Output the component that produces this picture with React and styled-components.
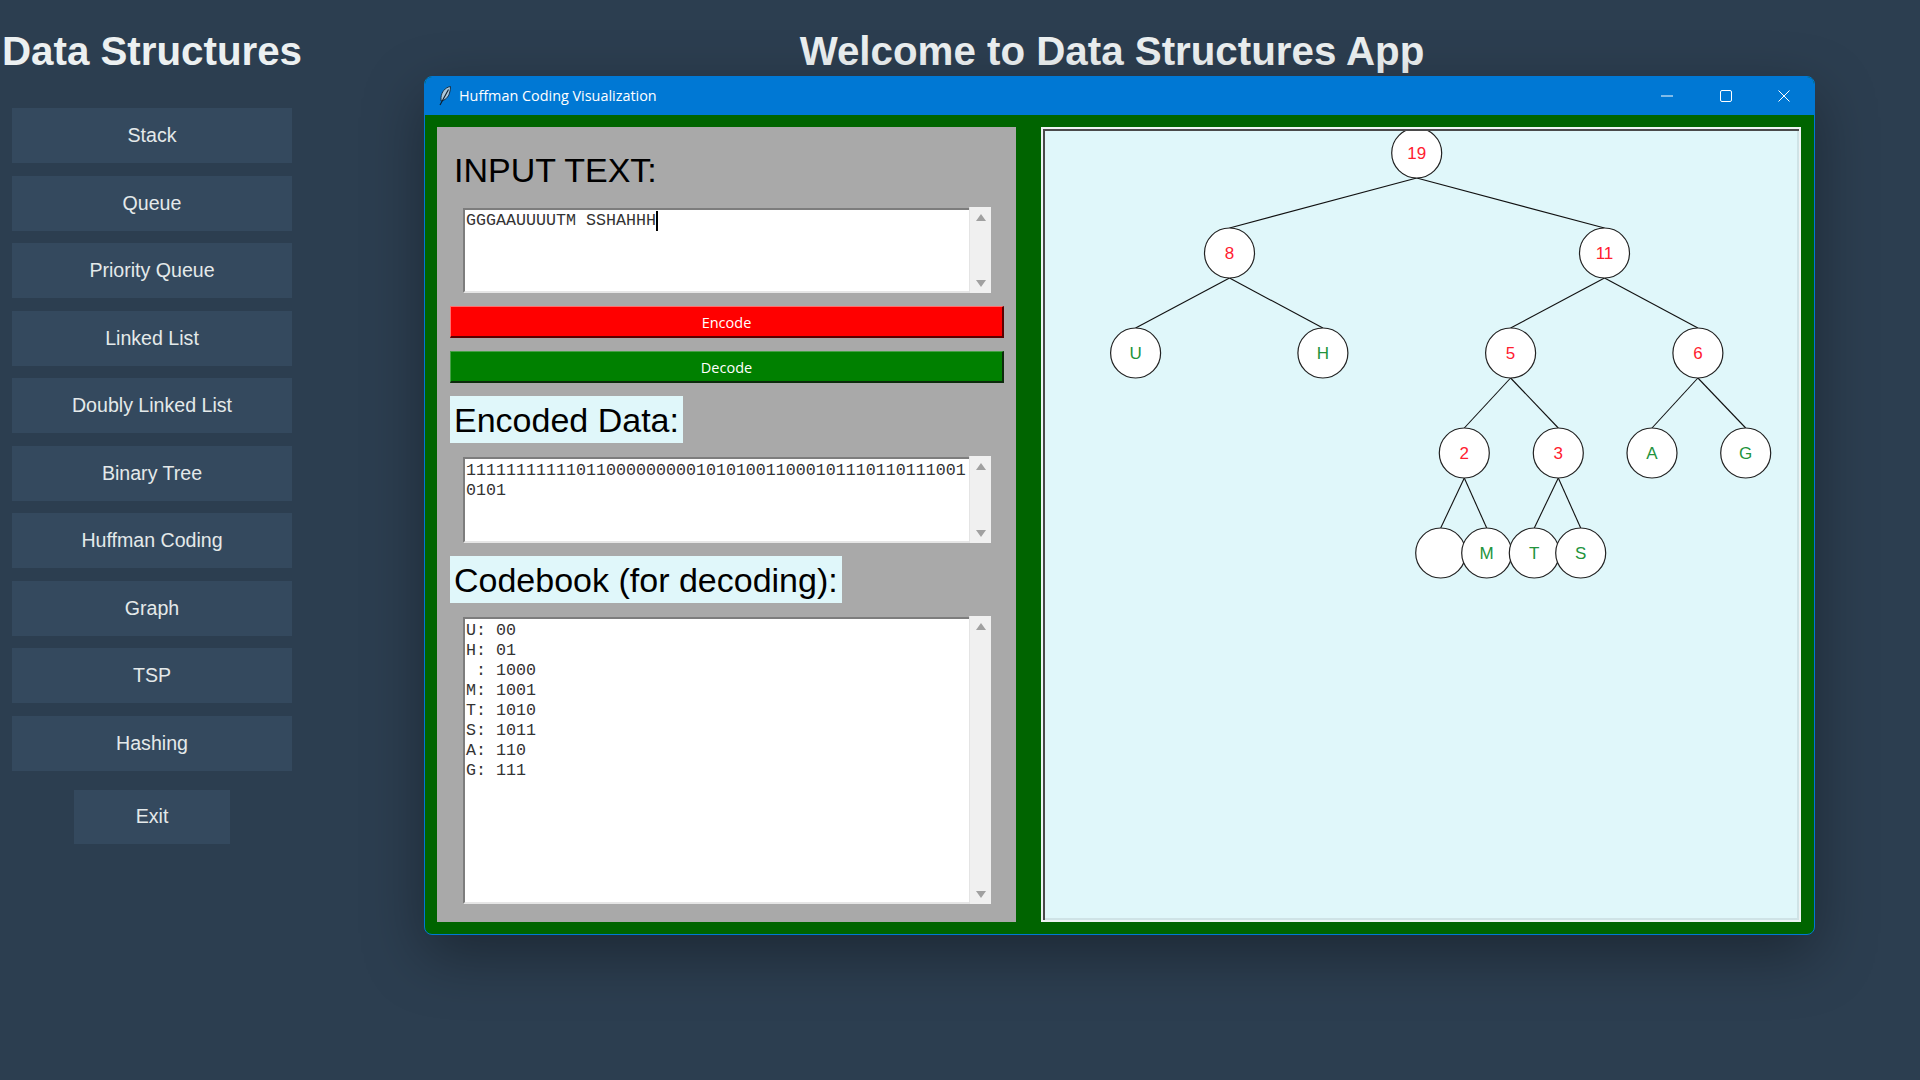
import React from "react";
import styled, { createGlobalStyle } from "styled-components";

const Global = createGlobalStyle`
  html, body { margin: 0; padding: 0; background: #2c3e50; }
  body { font-family: "Liberation Sans", Arial, sans-serif; overflow: hidden; }
`;
const Page = styled.div`
  width: 1920px; height: 1080px; display: flex; background: #2c3e50; overflow: hidden;
`;
const Sidebar = styled.aside`
  width: 304px; flex: none; display: flex; flex-direction: column; align-items: center; padding-top: 28px; box-sizing: border-box;
`;
const Heading = styled.h1`
  margin: 0; font-size: 40.3px; line-height: 48px; font-weight: 700; color: #ecf0f1; white-space: nowrap;
`;
const Nav = styled.nav`
  margin-top: 32px; display: flex; flex-direction: column; align-items: center; gap: 12.5px;
`;
const NavButton = styled.button`
  width: ${p => (p.$small ? "156px" : "280px")};
  height: ${p => (p.$small ? "54px" : "55px")};
  margin-top: ${p => (p.$small ? "6.5px" : "0")};
  border: 0; padding: 0; background: #34495e; color: #e4e9ea;
  font: 19.6px "Liberation Sans", Arial, sans-serif;
`;
const Main = styled.main`
  flex: 1; display: flex; flex-direction: column; padding-top: 28px;
`;
const MainHeading = styled(Heading)`
  align-self: center;
`;
const Window = styled.section`
  width: 1391px; height: 859px; margin: 0 0 0 120px; box-sizing: border-box;
  display: flex; flex-direction: column; border: 1px solid #0078d4; border-radius: 8px; overflow: hidden;
  background: #006400; box-shadow: 0 20px 60px rgba(0, 0, 0, 0.35);
`;
const TitleBar = styled.header`
  height: 38px; flex: none; background: #0078d4; display: flex; align-items: center; color: #fff; padding-left: 13px;
`;
const TitleText = styled.span`
  margin-left: 7px; margin-top: -2px; font: 14.4px "Open Sans", sans-serif; flex: 1; white-space: nowrap;
`;
const Controls = styled.div`
  display: flex; align-items: center; padding-right: 24px; gap: 46.5px;
`;
const Body = styled.div`
  flex: 1; display: flex; padding: 12px 13px 12px 12px; justify-content: space-between; min-height: 0;
`;
const Panel = styled.div`
  width: 579px; background: #a9a9a9; box-sizing: border-box; padding: 20px 12px 18px 13px; display: flex; flex-direction: column; gap: 13px;
`;
const Label = styled.div`
  align-self: flex-start; height: 47px; line-height: ${p => (p.$plain ? "47px" : "49px")}; padding: 0 4px; font-size: 34px; color: #000; white-space: nowrap;
  background: ${p => (p.$plain ? "transparent" : "#e0f7fa")};
`;
const TextBox = styled.div`
  height: ${p => p.$h}px; width: 528px; margin-left: 13px; display: flex; flex: none;
`;
const TextArea = styled.div`
  flex: 1; background: #fff; box-sizing: border-box; margin-top: 1px;
  border-style: solid; border-width: 2px 0 2px 2px; border-color: #7d7d7d #fff #e6e6e6 #7d7d7d;
  padding: ${p => (p.$tight ? "1px" : "2px")} 0 0 1px; font: 16.67px/20px "Liberation Mono", "Courier New", monospace; color: #333;
  white-space: pre-wrap; word-break: break-all; overflow: hidden;
`;
const Caret = styled.span`
  display: inline-block; width: 2px; height: 20px; background: #000; vertical-align: top;
`;
const Scrollbar = styled.div`
  width: 22px; flex: none; background: #f0f0f0; border-left: 1px solid #e4e4e4; box-sizing: border-box;
  display: flex; flex-direction: column; justify-content: space-between; align-items: center; padding: 7px 0 6px;
`;
const Arrow = styled.i`
  width: 0; height: 0; border-left: 5.5px solid transparent; border-right: 5.5px solid transparent;
  ${p => (p.$down ? "border-top: 7px solid #a0a0a0;" : "border-bottom: 7px solid #a0a0a0;")}
`;
const ActionButton = styled.button`
  height: 32px; flex: none; box-sizing: border-box; padding: 1px 0 0; color: #fff; font: 14.5px "Open Sans", sans-serif;
  background: ${p => p.$bg}; border-style: solid; border-width: 1px 2px 2px 1px;
  border-color: ${p => p.$light} ${p => p.$dark} ${p => p.$dark} ${p => p.$light};
`;
const Canvas = styled.div`
  width: 760px; height: 795px; box-sizing: border-box; background: #e0f7fa; border: 2px solid #eef3f3; padding: 2px;
  box-shadow: inset 2px 2px 0 #4a4a4a, inset -2px -2px 0 #cfe3e6;
`;
const TreeSvg = styled.svg`
  display: block; width: 752px; height: 787px;
`;

const navItems = ["Stack", "Queue", "Priority Queue", "Linked List", "Doubly Linked List", "Binary Tree", "Huffman Coding", "Graph", "TSP", "Hashing"];

const nodes = [
  { id: "19", x: 1416.7, y: 153, t: "19", leaf: false },
  { id: "8", x: 1229.5, y: 253, t: "8", p: "19" },
  { id: "11", x: 1604.5, y: 253, t: "11", p: "19" },
  { id: "U", x: 1135.6, y: 353, t: "U", p: "8", leaf: true },
  { id: "H", x: 1322.9, y: 353, t: "H", p: "8", leaf: true },
  { id: "5", x: 1510.6, y: 353, t: "5", p: "11" },
  { id: "6", x: 1697.9, y: 353, t: "6", p: "11" },
  { id: "2", x: 1464.3, y: 453, t: "2", p: "5" },
  { id: "3", x: 1558.3, y: 453, t: "3", p: "5" },
  { id: "A", x: 1652, y: 453, t: "A", p: "6", leaf: true },
  { id: "G", x: 1745.7, y: 453, t: "G", p: "6", leaf: true },
  { id: "sp", x: 1440.7, y: 553, t: " ", p: "2", leaf: true },
  { id: "M", x: 1486.7, y: 553, t: "M", p: "2", leaf: true },
  { id: "T", x: 1534.3, y: 553, t: "T", p: "3", leaf: true },
  { id: "S", x: 1580.7, y: 553, t: "S", p: "3", leaf: true },
];
const byId = Object.fromEntries(nodes.map(n => [n.id, n]));

function Tree() {
  return (
    <TreeSvg viewBox="1045 131 752 787">
      {nodes.filter(n => n.p).map(n => (
        <line key={n.id} x1={byId[n.p].x} y1={byId[n.p].y + 25} x2={n.x} y2={n.y - 25} stroke="#111" strokeWidth="1.1" />
      ))}
      {nodes.map(n => (
        <g key={n.id}>
          <circle cx={n.x} cy={n.y} r="25" fill="#fff" stroke="#222" strokeWidth="1.2" />
          <text x={n.x} y={n.y + 6} textAnchor="middle" fontFamily="Liberation Sans, Arial, sans-serif" fontSize="17" fill={n.leaf ? "#22933c" : "#ff2030"}>{n.t}</text>
        </g>
      ))}
    </TreeSvg>
  );
}

function Box({ h, tight, children }) {
  return (
    <TextBox $h={h}>
      <TextArea $tight={tight}>{children}</TextArea>
      <Scrollbar><Arrow /><Arrow $down /></Scrollbar>
    </TextBox>
  );
}

const encoded = "111111111110110000000001010100110001011101101110" + "010101";
const codebook = "U: 00\nH: 01\n : 1000\nM: 1001\nT: 1010\nS: 1011\nA: 110\nG: 111";

export default function App() {
  return (
    <Page>
      <Global />
      <Sidebar>
        <Heading>Data Structures</Heading>
        <Nav>
          {navItems.map(t => <NavButton key={t}>{t}</NavButton>)}
          <NavButton $small>Exit</NavButton>
        </Nav>
      </Sidebar>
      <Main>
        <MainHeading>Welcome to Data Structures App</MainHeading>
        <Window>
          <TitleBar>
            <svg width="14" height="20" viewBox="0 0 14 20" fill="none">
              <path d="M12.5 0.5 C7 1.5 3.5 6 3 11.5 L3 15 C7 14.5 10.5 11 11.5 7 C12.2 5 12.6 2.5 12.5 0.5 Z" fill="#a9c8dc" stroke="#12263a" strokeWidth="0.9" />
              <path d="M10.5 3.5 L2 19" stroke="#0c1c2a" strokeWidth="1.1" />
            </svg>
            <TitleText>Huffman Coding Visualization</TitleText>
            <Controls>
              <svg width="12" height="12" viewBox="0 0 12 12"><path d="M0 6H12" stroke="#fff" strokeWidth="1" /></svg>
              <svg width="12" height="12" viewBox="0 0 12 12" fill="none"><rect x="0.5" y="0.5" width="11" height="11" rx="1.5" stroke="#fff" strokeWidth="1" /></svg>
              <svg width="12" height="12" viewBox="0 0 12 12" fill="none"><path d="M0.5 0.5L11.5 11.5M11.5 0.5L0.5 11.5" stroke="#fff" strokeWidth="1" /></svg>
            </Controls>
          </TitleBar>
          <Body>
            <Panel>
              <Label $plain>INPUT TEXT:</Label>
              <Box h={86} tight>GGGAAUUUUTM SSHAHHH<Caret /></Box>
              <ActionButton $bg="#ff0000" $light="#ff7070" $dark="#5a0000">Encode</ActionButton>
              <ActionButton $bg="#008000" $light="#45a045" $dark="#0d2a0d">Decode</ActionButton>
              <Label>Encoded Data:</Label>
              <Box h={87}>{encoded.slice(0, 50) + "\n" + "0101"}</Box>
              <Label>Codebook (for decoding):</Label>
              <Box h={288}>{codebook}</Box>
            </Panel>
            <Canvas><Tree /></Canvas>
          </Body>
        </Window>
      </Main>
    </Page>
  );
}
